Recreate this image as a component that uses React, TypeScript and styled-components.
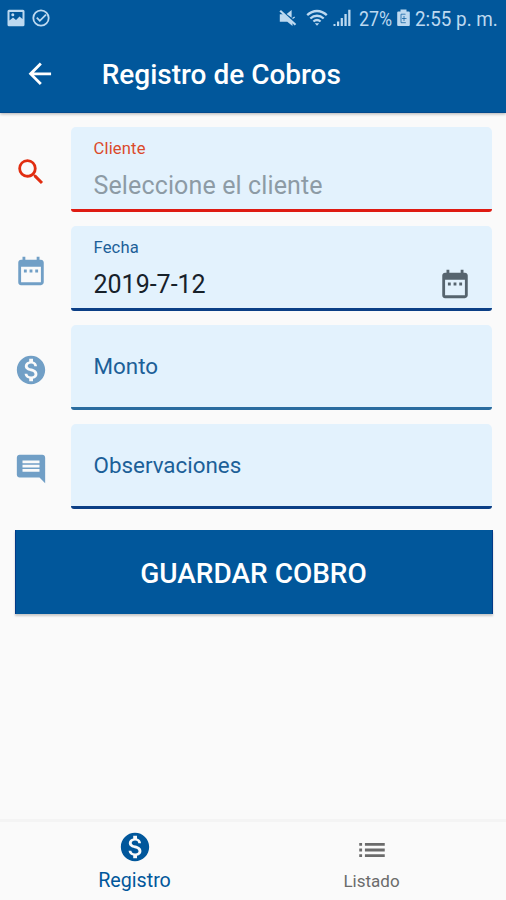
import React from "react";
import styled, { createGlobalStyle } from "styled-components";
import {
  MdArrowBack,
  MdSearch,
  MdDateRange,
  MdMonetizationOn,
  MdComment,
  MdList,
} from "react-icons/md";

const GlobalStyle = createGlobalStyle`
  * { box-sizing: border-box; }
  body { margin: 0; background: #fafafa; font-family: Roboto, "Liberation Sans", sans-serif; }
`;

const Screen = styled.div`
  width: 506px;
  height: 900px;
  display: flex;
  flex-direction: column;
  background: #fafafa;
  overflow: hidden;
`;

const Header = styled.header`
  flex: none;
  height: 113px;
  background: #01579b;
  border-bottom: 1px solid #034a8e;
  box-shadow: 0 1px 3px rgba(0, 0, 0, 0.3);
`;

const StatusBar = styled.div`
  height: 36px;
  display: flex;
  align-items: center;
  padding: 0 8px 0 7px;
  color: #bdd9f0;
`;

const StatusGroup = styled.div<{ $gap: number; $end?: number }>`
  display: flex;
  align-items: center;
  gap: ${(p) => p.$gap}px;
  margin-right: ${(p) => p.$end ?? 0}px;
`;

const Spacer = styled.div`
  flex: 1;
`;

const StatusText = styled.span<{ $width: number; $scale: number }>`
  display: block;
  width: ${(p) => p.$width}px;
  font-size: 20.5px;
  line-height: 24px;
  white-space: nowrap;
  transform: scaleX(${(p) => p.$scale});
  transform-origin: left center;
  margin-top: 2px;
`;

const TitleBar = styled.div`
  height: 76px;
  display: flex;
  align-items: center;
  padding-left: 23px;
  color: #fff;
  font-size: 33.7px;
`;

const Title = styled.h1`
  margin: 2px 0 0 45px;
  font-size: 28px;
  font-weight: 500;
  line-height: 34px;
  white-space: nowrap;
`;

const Form = styled.main`
  flex: 1;
  padding: 14px 14px 0;
  display: flex;
  flex-direction: column;
  gap: 14px;
`;

const Row = styled.div`
  display: flex;
  align-items: center;
  height: 85px;
`;

const RowIcon = styled.div<{ $color: string }>`
  width: 57px;
  padding-top: 4px;
  display: flex;
  font-size: 34px;
  color: ${(p) => p.$color};
`;

const Field = styled.div<{ $line: string }>`
  flex: 1;
  height: 85px;
  display: flex;
  align-items: center;
  justify-content: space-between;
  padding: 0 20px 0 22.5px;
  background: #e3f2fd;
  border-bottom: 3px solid ${(p) => p.$line};
  border-radius: 5px 5px 3px 3px;
`;

const FieldText = styled.div`
  display: flex;
  flex-direction: column;
  white-space: nowrap;
  padding-top: 4px;
`;

const SmallLabel = styled.span<{ $color: string }>`
  font-size: 16.6px;
  line-height: 20px;
  letter-spacing: 0.15px;
  color: ${(p) => p.$color};
`;

const Value = styled.span<{ $color: string; $spacing: number }>`
  margin-top: 11px;
  font-size: 25px;
  line-height: 32px;
  letter-spacing: ${(p) => p.$spacing}px;
  color: ${(p) => p.$color};
`;

const Placeholder = styled.span`
  font-size: 22.4px;
  line-height: 28px;
  color: #1c6098;
`;

const Trailing = styled.div`
  display: flex;
  margin-top: 33px;
  font-size: 34px;
  color: #56646e;
`;

const SaveButton = styled.button`
  flex: none;
  height: 84px;
  margin: 7px -0.5px 0 0.5px;
  border: 0 solid #023a88;
  border-width: 0 1px;
  border-radius: 0;
  background: #01579b;
  box-shadow: 0 2px 2px rgba(0, 0, 0, 0.2);
  color: #fff;
  font-family: inherit;
  font-size: 28px;
  font-weight: 500;
  padding: 3px 0 0;
`;

const BottomNav = styled.nav`
  flex: none;
  height: 81px;
  padding: 0 16px;
  border-top: 3px solid #f4f4f4;
  display: grid;
  grid-template-columns: 1fr 1fr;
`;

const Tab = styled.div<{ $active?: boolean }>`
  display: flex;
  flex-direction: column;
  align-items: center;
  padding-top: ${(p) => (p.$active ? 8 : 11)}px;
  color: ${(p) => (p.$active ? "#01579b" : "#6b6b6b")};
  font-size: ${(p) => (p.$active ? 19.7 : 17)}px;
  line-height: 24px;
  svg { font-size: 34px; }
`;

const TabLabel = styled.span<{ $top: number }>`
  margin-top: ${(p) => p.$top}px;
`;

const PictureIcon = () => (
  <svg width="18" height="18" viewBox="0 0 18 18">
    <path fill="currentColor" fillRule="evenodd" d="M2 .8h14a1.5 1.5 0 0 1 1.5 1.5v13.4a1.5 1.5 0 0 1-1.5 1.5H2a1.5 1.5 0 0 1-1.5-1.5V2.300A1.500 1.500 0 0 1 2 .8zM2.500 3v8.500l3.500-3 3 2.500 3.500-3.500 3 2.500V3z" />
    <circle cx="5.800" cy="5.700" r="1.500" fill="currentColor" />
  </svg>
);

const CheckIcon = () => (
  <svg width="18" height="18" viewBox="0 0 18 18" fill="none" stroke="currentColor" strokeWidth="1.8">
    <circle cx="9" cy="9" r="7.700" />
    <path d="M4.800 8.600l3 3.200L14 5.600" />
  </svg>
);

const MuteIcon = () => (
  <svg width="18" height="18" viewBox="0 0 18 18" fill="currentColor">
    <path d="M.8 5.200h3.700l9 8.200V17l-5.200-4.200H.8z" />
    <path d="M7.600 5L12.600 1v7.800z" />
    <path stroke="currentColor" strokeWidth="2.200" d="M1.200 1.800l15.300 14" />
    <path stroke="currentColor" strokeWidth="1.300" d="M13.500 9.500l2.200-1.500" />
  </svg>
);

const WifiIcon = () => (
  <svg width="22" height="18" viewBox="0 0 22 18" fill="none" stroke="currentColor" strokeWidth="2.300">
    <path d="M1.200 6.200C7 .6 15 .6 20.800 6.200" />
    <path d="M4.300 9.500c4-3.700 9.400-3.700 13.400 0" />
    <path d="M7.400 12.500c2.200-1.900 5-1.900 7.200 0" />
    <path d="M8.800 14.200h4.400L11 16.800z" fill="currentColor" stroke="none" />
  </svg>
);

const SignalIcon = () => (
  <svg width="18" height="18" viewBox="0 0 18 18" fill="currentColor">
    <path d="M.5 15h2v2h-2zM4 12.500h2.200V17H4zM7.700 9h2.200v8H7.700zM11.400 5h2.300v12h-2.300zM15.200.8h2.300V17h-2.300z" />
  </svg>
);

const BatteryIcon = () => (
  <svg width="13" height="18" viewBox="0 0 13 18">
    <path fill="currentColor" d="M3.500.6h6v2h2.300a1 1 0 0 1 1 1v12.500a1 1 0 0 1-1 1H1.200a1 1 0 0 1-1-1V3.600a1 1 0 0 1 1-1h2.300z" />
    <path fill="none" stroke="#01579b" strokeOpacity="0.7" strokeWidth="1" d="M8.500 5.200H4v8.500h4.800M7 7v5M5 9.500h4.500" />
  </svg>
);

export default function App() {
  return (
    <>
      <GlobalStyle />
      <Screen>
        <Header>
          <StatusBar>
            <StatusGroup $gap={7}>
              <PictureIcon />
              <CheckIcon />
            </StatusGroup>
            <Spacer />
            <StatusGroup $gap={9} $end={5}>
              <MuteIcon />
              <WifiIcon />
            </StatusGroup>
            <StatusGroup $gap={5} $end={8}>
              <SignalIcon />
            </StatusGroup>
            <StatusGroup $gap={5}>
              <StatusText $width={33.5} $scale={0.87}>27%</StatusText>
              <BatteryIcon />
              <StatusText $width={83} $scale={0.92}>2:55 p. m.</StatusText>
            </StatusGroup>
          </StatusBar>
          <TitleBar>
            <MdArrowBack />
            <Title>Registro de Cobros</Title>
          </TitleBar>
        </Header>
        <Form>
          <Row>
            <RowIcon $color="#e12d10"><MdSearch /></RowIcon>
            <Field $line="#df1b12">
              <FieldText>
                <SmallLabel $color="#db4a2b">Cliente</SmallLabel>
                <Value $color="#8d9ba5" $spacing={0.13}>Seleccione el cliente</Value>
              </FieldText>
            </Field>
          </Row>
          <Row>
            <RowIcon $color="#719fc6"><MdDateRange /></RowIcon>
            <Field $line="#0b3f86">
              <FieldText>
                <SmallLabel $color="#1c6098">Fecha</SmallLabel>
                <Value $color="#17212a" $spacing={0}>2019-7-12</Value>
              </FieldText>
              <Trailing><MdDateRange /></Trailing>
            </Field>
          </Row>
          <Row>
            <RowIcon $color="#719fc6"><MdMonetizationOn /></RowIcon>
            <Field $line="#2a6c9f"><Placeholder>Monto</Placeholder></Field>
          </Row>
          <Row>
            <RowIcon $color="#719fc6"><MdComment /></RowIcon>
            <Field $line="#0b3f86"><Placeholder>Observaciones</Placeholder></Field>
          </Row>
          <SaveButton>GUARDAR COBRO</SaveButton>
        </Form>
        <BottomNav>
          <Tab $active>
            <MdMonetizationOn />
            <TabLabel $top={5}>Registro</TabLabel>
          </Tab>
          <Tab>
            <MdList />
            <TabLabel $top={2}>Listado</TabLabel>
          </Tab>
        </BottomNav>
      </Screen>
    </>
  );
}
